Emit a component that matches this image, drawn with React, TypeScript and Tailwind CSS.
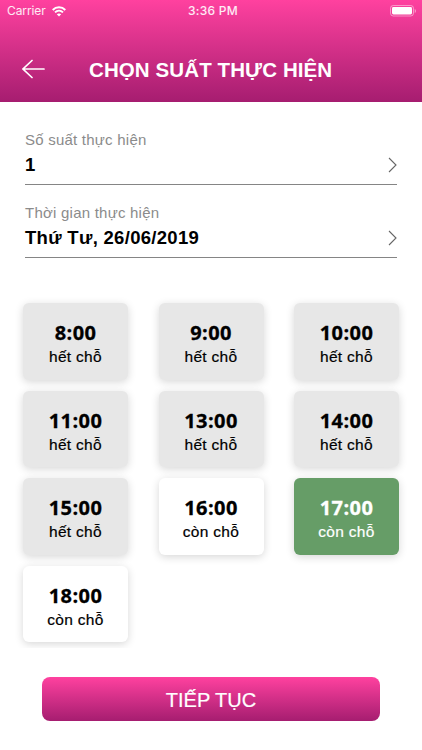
type Slot = { time: string; state: 'full' | 'free' | 'selected' };

const slots: Slot[] = [
  { time: '8:00', state: 'full' },
  { time: '9:00', state: 'full' },
  { time: '10:00', state: 'full' },
  { time: '11:00', state: 'full' },
  { time: '13:00', state: 'full' },
  { time: '14:00', state: 'full' },
  { time: '15:00', state: 'full' },
  { time: '16:00', state: 'free' },
  { time: '17:00', state: 'selected' },
  { time: '18:00', state: 'free' },
];

const slotColors = {
  full: 'bg-[#e7e7e7] text-black',
  free: 'bg-white text-black',
  selected: 'bg-[#669d67] text-white',
};

function StatusBar() {
  return (
    <div className="grid h-[22px] grid-cols-3 items-center pr-[6px] pl-[7px] font-['Inter',sans-serif] text-[12px] text-white/90">
      <div className="flex items-center gap-[6px]">
        <span className="tracking-[-0.1px]">Carrier</span>
        <svg width="14" height="11" viewBox="0 0 14 11" fill="none" stroke="white" strokeWidth="1.9">
          <path d="M0.7 4C4.2 .4 9.8 .4 13.3 4" />
          <path d="M3 6.4c2.3-2.2 5.7-2.2 8 0" />
          <path d="M7 10.4 4.8 8.2c1.3-1.1 3.1-1.1 4.4 0Z" fill="white" stroke="none" />
        </svg>
      </div>
      <span className="pl-[3px] text-center font-medium tracking-[0.25px]">3:36 PM</span>
      <svg className="justify-self-end" width="26" height="12" viewBox="0 0 26 12">
        <rect x=".5" y=".5" width="23" height="10.5" rx="2.8" fill="none" stroke="white" strokeOpacity=".45" />
        <rect x="2" y="2" width="20" height="7.5" rx="1.4" fill="white" />
        <path d="M24.7 4v4c.8-.4 1.3-1.1 1.3-2s-.5-1.6-1.3-2Z" fill="white" fillOpacity=".45" />
      </svg>
    </div>
  );
}

function Field({ label, value }: { label: string; value: string }) {
  return (
    <div className="h-[73px]">
      <div className="h-[55px] border-b border-[#858585]">
        <div className="h-[19px] text-[15px] leading-[19px] tracking-[0.23px] text-[#8b8b8b]">{label}</div>
        <div className="mt-[4px] flex h-[24px] items-center justify-between">
          <span className="text-[18.5px] leading-[24px] font-bold tracking-[0.3px] text-black">{value}</span>
          <svg width="9" height="16" viewBox="0 0 9 16" fill="none" stroke="#666" strokeWidth="1.1">
            <path d="m1 1 7 7-7 7" />
          </svg>
        </div>
      </div>
    </div>
  );
}

function SlotCard({ slot }: { slot: Slot }) {
  return (
    <button
      className={`flex h-[76.5px] flex-col items-center rounded-[6px] pt-[17px] shadow-[0_2px_9px_rgba(0,0,0,0.16)] ${slotColors[slot.state]}`}
    >
      <span className="font-['Open_Sans',sans-serif] text-[20px] leading-[26px] font-bold tracking-[0.4px] [-webkit-text-stroke:0.3px_currentColor]">
        {slot.time}
      </span>
      <span className="text-[15.5px] leading-[22px] tracking-[0.3px] [-webkit-text-stroke:0.2px_currentColor]">
        {slot.state === 'full' ? 'hết chỗ' : 'còn chỗ'}
      </span>
    </button>
  );
}

export default function App() {
  return (
    <div className="flex h-[750px] w-[422px] flex-col overflow-hidden bg-white font-['Liberation_Sans',sans-serif]">
      <header className="h-[102px] shrink-0 bg-linear-to-b from-[#ff419f] to-[#a61d70]">
        <StatusBar />
        <div className="flex h-[80px] items-start pt-[34px] text-white">
          <button className="ml-[22px] h-[26px] w-[23px]" aria-label="Back">
            <svg width="23" height="26" viewBox="0 0 23 26" fill="none" stroke="white" strokeWidth="1.7" strokeLinecap="round">
              <path d="M1 13H22M10 4.5 1 13l9 8.5" />
            </svg>
          </button>
          <h1 className="ml-[44px] text-[20.5px] leading-[28px] font-bold tracking-[0.1px] whitespace-nowrap">
            CHỌN SUẤT THỰC HIỆN
          </h1>
        </div>
      </header>
      <section className="px-[25px] pt-[28px]">
        <Field label="Số suất thực hiện" value="1" />
        <Field label="Thời gian thực hiện" value="Thứ Tư, 26/06/2019" />
      </section>
      <section className="h-[372px] w-[422px] shrink-0 overflow-hidden">
        <div className="grid grid-cols-3 gap-x-[30.5px] gap-y-[11px] px-[23px] pt-[27px]">
          {slots.map((slot) => (
            <SlotCard key={slot.time} slot={slot} />
          ))}
        </div>
      </section>
      <button className="mx-[42px] mt-[29px] flex h-[44px] shrink-0 items-center justify-center rounded-[8px] bg-linear-to-b from-[#ff419f] to-[#a61d70] pt-[2px] text-[20px] text-white [-webkit-text-stroke:0.2px_currentColor]">
        TIẾP TỤC
      </button>
    </div>
  );
}
